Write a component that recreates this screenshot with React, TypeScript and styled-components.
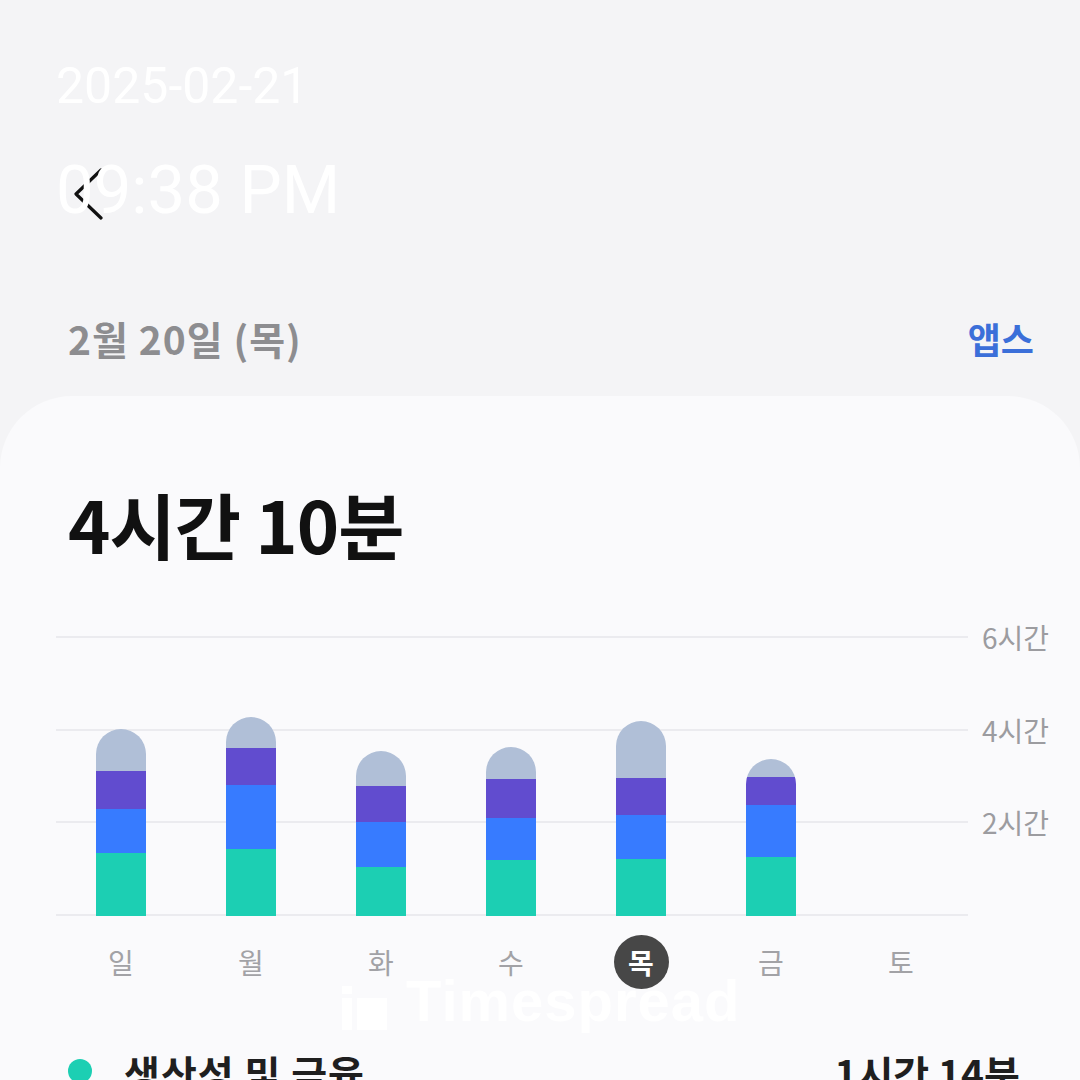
import React from "react";
import styled, { createGlobalStyle } from "styled-components";

const Global = createGlobalStyle`
  html, body { margin: 0; padding: 0; background: #f4f4f6; }
  body { font-family: "Noto Sans CJK KR", "Noto Sans", sans-serif; }
`;

const Screen = styled.div`
  position: relative;
  width: 1080px;
  height: 1080px;
  overflow: hidden;
  background: #f4f4f6;
  display: flex;
  flex-direction: column;
`;

const TopBar = styled.div`
  flex: none;
  height: 290px;
  box-sizing: border-box;
  padding: 168px 0 0 73px;
`;

const BackButton = styled.button`
  border: none;
  background: none;
  padding: 0;
  width: 30px;
  height: 52px;
  display: block;
`;

const DateRow = styled.div`
  flex: none;
  height: 106px;
  box-sizing: border-box;
  padding: 0 46px 10px 68px;
  display: flex;
  align-items: center;
  justify-content: space-between;
`;

const DateText = styled.div`
  font-size: 39px;
  font-weight: 700;
  color: #8d8d90;
  letter-spacing: 1px;
  line-height: 1;
`;

const AppsLink = styled.div`
  font-size: 36px;
  font-weight: 700;
  color: #3b6fd9;
  line-height: 1;
`;

const Card = styled.div`
  flex: none;
  height: 700px;
  background: #fafafc;
  border-radius: 72px 72px 0 0;
  box-sizing: border-box;
  padding: 93px 0 0 56px;
  display: flex;
  flex-direction: column;
`;

const Total = styled.div`
  margin-left: 12px;
  font-size: 72px;
  font-weight: 700;
  color: #111;
  line-height: 68px;
  letter-spacing: -1px;
`;

const ChartRow = styled.div`
  margin-top: 79px;
  display: flex;
  align-items: flex-start;
  gap: 14px;
`;

const Plot = styled.div`
  width: 912px;
  height: 280px;
  background-image: repeating-linear-gradient(
    to bottom,
    #ebebef 0px,
    #ebebef 2px,
    transparent 2px,
    transparent 92.67px
  );
  display: flex;
  align-items: flex-end;
`;

const BarSlot = styled.div`
  width: 130px;
  height: 100%;
  display: flex;
  align-items: flex-end;
  justify-content: center;
`;

const Bar = styled.div`
  width: 50px;
  border-radius: 25px 25px 0 0;
  overflow: hidden;
  display: flex;
  flex-direction: column;
`;

const Segment = styled.div<{ $color: string }>`
  background: ${(p) => p.$color};
`;

const AxisLabels = styled.div`
  height: 280px;
  display: flex;
  flex-direction: column;
  justify-content: space-between;
`;

const AxisLabel = styled.div`
  height: 2px;
  line-height: 2px;
  font-size: 28px;
  color: #9c9ca0;
  white-space: nowrap;
`;

const DayRow = styled.div`
  margin-top: 19px;
  display: flex;
  width: 912px;
`;

const DaySlot = styled.div`
  width: 130px;
  height: 54px;
  display: flex;
  align-items: center;
  justify-content: center;
`;

const DayLabel = styled.div<{ $active?: boolean }>`
  width: 55px;
  height: 54px;
  border-radius: 50%;
  display: flex;
  align-items: center;
  justify-content: center;
  font-size: 28px;
  line-height: 1;
  color: ${(p) => (p.$active ? "#ffffff" : "#a2a2a6")};
  background: ${(p) => (p.$active ? "#474747" : "transparent")};
  font-weight: ${(p) => (p.$active ? 700 : 400)};
`;

const LegendRow = styled.div`
  margin-top: 64px;
  padding: 0 60px 0 12px;
  display: flex;
  align-items: center;
`;

const Dot = styled.span<{ $color: string }>`
  width: 24px;
  height: 24px;
  border-radius: 50%;
  background: ${(p) => p.$color};
  margin-right: 32px;
  flex: none;
  margin-bottom: 4px;
`;

const LegendName = styled.div`
  flex: 1;
  font-size: 39px;
  font-weight: 700;
  color: #1f1f1f;
  line-height: 1;
  letter-spacing: 1px;
`;

const LegendValue = styled.div`
  font-size: 39px;
  font-weight: 700;
  color: #1f1f1f;
  line-height: 1;
`;

const StampOverlay = styled.div`
  position: absolute;
  left: 56px;
  top: 61px;
  display: flex;
  flex-direction: column;
  gap: 46px;
  font-family: Roboto, "Noto Sans", sans-serif;
  color: #ffffff;
  pointer-events: none;
`;

const StampDate = styled.div`
  font-size: 50px;
  line-height: 1;
`;

const StampTime = styled.div`
  font-size: 67px;
  line-height: 1;
`;

const Watermark = styled.div`
  position: absolute;
  left: 342px;
  top: 972px;
  display: flex;
  align-items: flex-end;
  gap: 18px;
  color: rgba(255, 255, 255, 0.92);
  pointer-events: none;
`;

const WatermarkText = styled.div`
  font-family: "Liberation Sans", Arial, sans-serif;
  font-weight: 700;
  font-size: 58px;
  line-height: 58px;
  letter-spacing: 1px;
`;

const COLORS = {
  other: "#b0bfd7",
  purple: "#614ccf",
  blue: "#377bff",
  green: "#1ccfb3",
};

type Day = { label: string; segs: [number, number, number, number] | null; active?: boolean };

const DAYS: Day[] = [
  { label: "일", segs: [42, 38, 44, 63] },
  { label: "월", segs: [31, 37, 64, 67] },
  { label: "화", segs: [35, 36, 45, 49] },
  { label: "수", segs: [32, 39, 42, 56] },
  { label: "목", segs: [57, 37, 44, 57], active: true },
  { label: "금", segs: [18, 28, 52, 59] },
  { label: "토", segs: null },
];

const SEG_COLORS = [COLORS.other, COLORS.purple, COLORS.blue, COLORS.green];

export default function App() {
  return (
    <>
      <Global />
      <Screen>
        <TopBar>
          <BackButton aria-label="back">
            <svg width="30" height="52" viewBox="0 0 30 52" fill="none">
              <path
                d="M28 2 L3 26 L28 50"
                stroke="#111"
                strokeWidth="3.2"
                strokeLinecap="round"
                strokeLinejoin="round"
              />
            </svg>
          </BackButton>
        </TopBar>
        <DateRow>
          <DateText>2월 20일 (목)</DateText>
          <AppsLink>앱스</AppsLink>
        </DateRow>
        <Card>
          <Total>4시간 10분</Total>
          <ChartRow>
            <div>
              <Plot>
                {DAYS.map((d) => (
                  <BarSlot key={d.label}>
                    {d.segs && (
                      <Bar>
                        {d.segs.map((h, i) => (
                          <Segment key={i} $color={SEG_COLORS[i]} style={{ height: h }} />
                        ))}
                      </Bar>
                    )}
                  </BarSlot>
                ))}
              </Plot>
              <DayRow>
                {DAYS.map((d) => (
                  <DaySlot key={d.label}>
                    <DayLabel $active={d.active}>{d.label}</DayLabel>
                  </DaySlot>
                ))}
              </DayRow>
            </div>
            <AxisLabels>
              <AxisLabel>6시간</AxisLabel>
              <AxisLabel>4시간</AxisLabel>
              <AxisLabel>2시간</AxisLabel>
              <AxisLabel />
            </AxisLabels>
          </ChartRow>
          <LegendRow>
            <Dot $color={COLORS.green} />
            <LegendName>생산성 및 금융</LegendName>
            <LegendValue>1시간 14분</LegendValue>
          </LegendRow>
        </Card>
        <StampOverlay>
          <StampDate>2025-02-21</StampDate>
          <StampTime>09:38 PM</StampTime>
        </StampOverlay>
        <Watermark>
          <svg width="46" height="44" viewBox="0 0 46 44" fill="currentColor">
            <rect x="0" y="0" width="10" height="8" />
            <rect x="0" y="12" width="10" height="32" />
            <rect x="15" y="12" width="30" height="32" />
          </svg>
          <WatermarkText>Timespread</WatermarkText>
        </Watermark>
      </Screen>
    </>
  );
}
